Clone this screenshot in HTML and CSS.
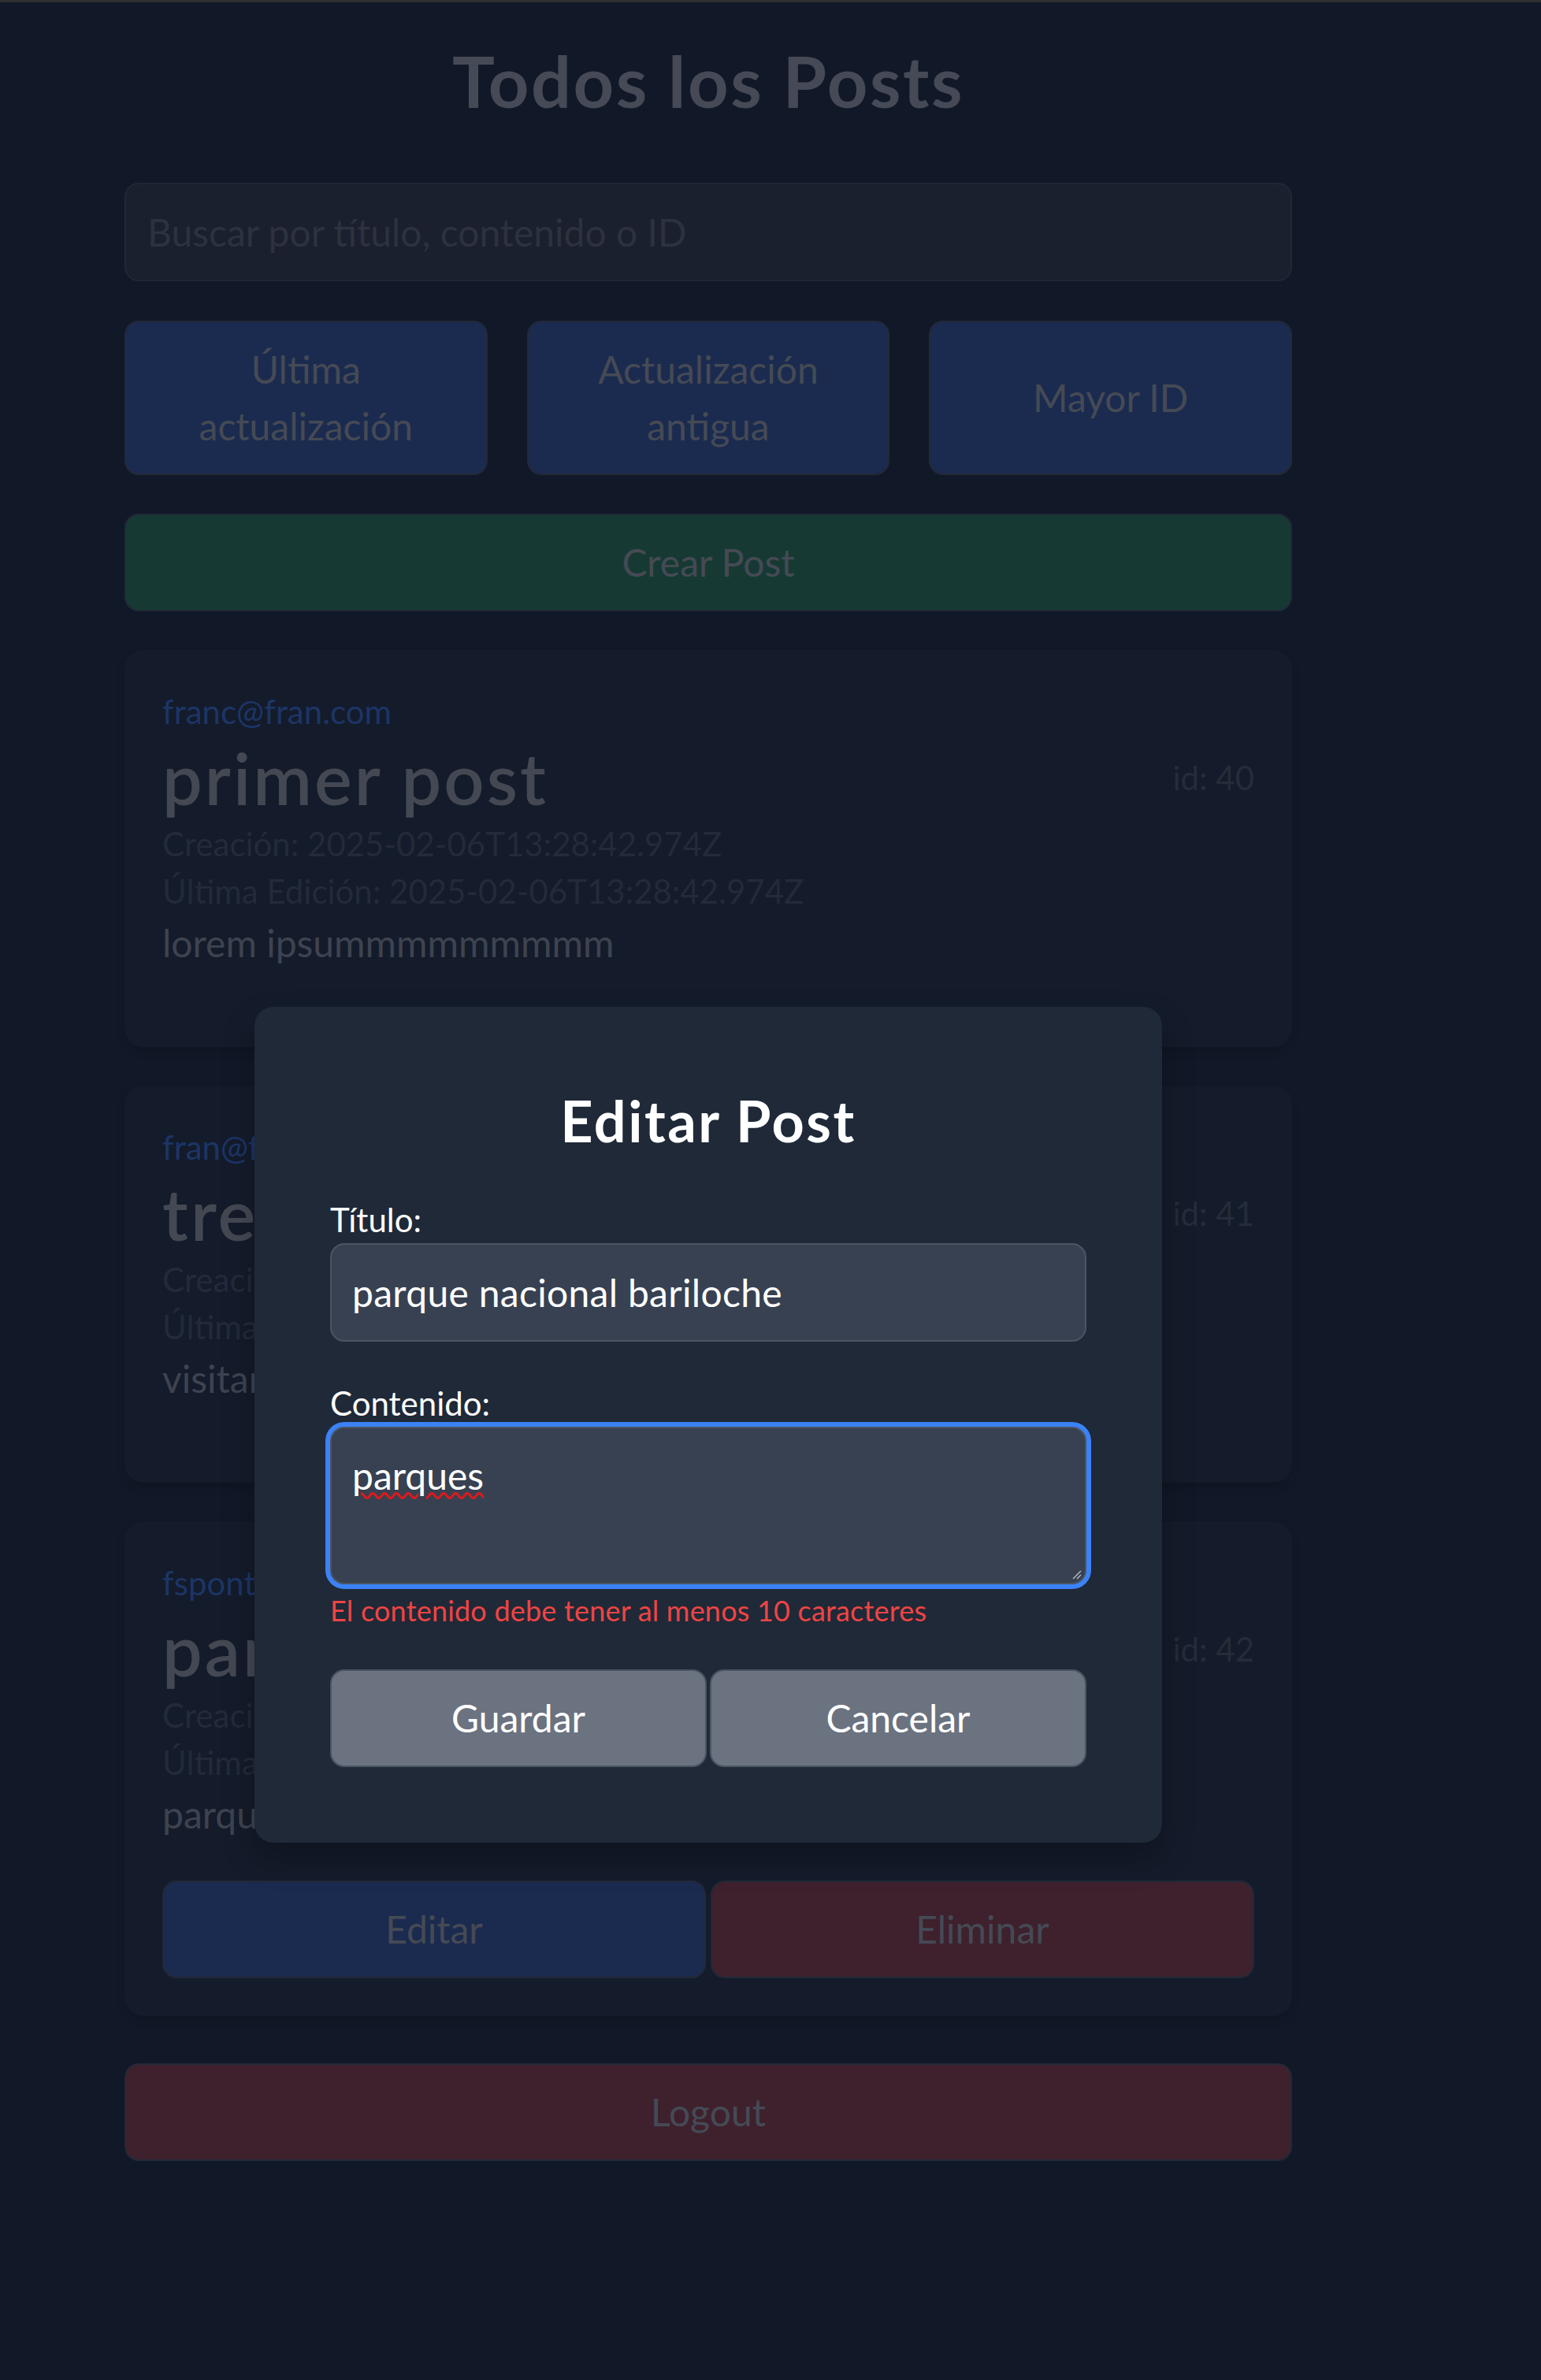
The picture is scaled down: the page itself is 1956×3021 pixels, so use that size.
FILE: index.html
```html
<!DOCTYPE html>
<html lang="es">
<head>
<meta charset="utf-8">
<title>Todos los Posts</title>
<link rel="stylesheet" href="styles.css">
</head>
<body>
<div class="topbar"></div>
<div class="page">
  <main class="container">
    <h1 class="page-title">Todos los Posts</h1>
    <input class="search" type="text" placeholder="Buscar por título, contenido o ID">
    <div class="sort-row">
      <button class="btn btn-blue">Última actualización</button>
      <button class="btn btn-blue">Actualización antigua</button>
      <button class="btn btn-blue">Mayor ID</button>
    </div>
    <button class="btn btn-green btn-wide">Crear Post</button>

    <div class="posts">
      <article class="card">
        <p class="card-email">franc@fran.com</p>
        <div class="card-head">
          <h2 class="card-title">primer post</h2>
          <span class="card-id">id: 40</span>
        </div>
        <p class="card-date">Creación: 2025-02-06T13:28:42.974Z</p>
        <p class="card-date">Última Edición: 2025-02-06T13:28:42.974Z</p>
        <p class="card-body">lorem ipsummmmmmmmm</p>
        <div class="card-actions"></div>
      </article>

      <article class="card">
        <p class="card-email">fran@fran.com</p>
        <div class="card-head">
          <h2 class="card-title">tres</h2>
          <span class="card-id">id: 41</span>
        </div>
        <p class="card-date">Creación: 2025-02-06T13:41:10.512Z</p>
        <p class="card-date">Última Edición: 2025-02-06T13:41:10.512Z</p>
        <p class="card-body">visitar bariloche</p>
        <div class="card-actions"></div>
      </article>

      <article class="card">
        <p class="card-email">fsponton@gmail.com</p>
        <div class="card-head">
          <h2 class="card-title">parque nacional</h2>
          <span class="card-id">id: 42</span>
        </div>
        <p class="card-date">Creación: 2025-02-06T14:02:31.208Z</p>
        <p class="card-date">Última Edición: 2025-02-06T14:02:31.208Z</p>
        <p class="card-body">parques</p>
        <div class="card-actions">
          <button class="btn btn-blue btn-half">Editar</button>
          <button class="btn btn-red btn-half">Eliminar</button>
        </div>
      </article>
    </div>

    <button class="btn btn-red btn-wide btn-logout">Logout</button>
  </main>

  <div class="overlay">
    <form class="modal">
      <h2 class="modal-title">Editar Post</h2>
      <div class="field">
        <label class="field-label" for="titulo">Título:</label>
        <input class="field-input" id="titulo" type="text" value="parque nacional bariloche">
      </div>
      <div class="field field-last">
        <label class="field-label">Contenido:</label>
        <div class="field-textarea" role="textbox" aria-multiline="true"><span class="misspelled">parques</span><svg class="resize-grip" width="14" height="14" viewBox="0 0 14 14"><path d="M13 3 L3 13 M13 8 L8 13" stroke="#b8bcc4" stroke-width="1.4" fill="none"/></svg></div>
        <p class="field-error">El contenido debe tener al menos 10 caracteres</p>
      </div>
      <div class="modal-actions">
        <button type="button" class="btn btn-gray btn-half">Guardar</button>
        <button type="button" class="btn btn-gray btn-half">Cancelar</button>
      </div>
    </form>
  </div>
</div>
</body>
</html>
```

FILE: styles.css
```css
* {
  box-sizing: border-box;
}

html, body {
  margin: 0;
  padding: 0;
  background: #111827;
}

body {
  font-family: "Lato", "Noto Sans", "Liberation Sans", sans-serif;
  font-size: 48px;
  line-height: 72px;
  color: #464b57;
  min-height: 3021px;
}

p, h1, h2 {
  margin: 0;
}

.topbar {
  height: 3px;
  background: #2f3031;
}

.page {
  position: relative;
  width: 1798px;
  min-height: 3018px;
}

.container {
  width: 1482px;
  margin: 0 auto;
  padding-top: 45px;
  display: flex;
  flex-direction: column;
}

.page-title {
  font-size: 90px;
  line-height: 108px;
  font-weight: 700;
  letter-spacing: 2.5px;
  text-align: center;
  color: #454a56;
  margin-bottom: 76px;
}

.search {
  display: block;
  width: 100%;
  height: 125px;
  padding: 0 27px;
  font-family: inherit;
  font-size: 48px;
  color: #464b57;
  background: #1a202d;
  border: 2px solid #212735;
  border-radius: 18px;
  outline: none;
  margin-bottom: 50px;
}

.search::placeholder {
  color: #2c323f;
}

.btn {
  font-family: inherit;
  font-size: 48px;
  line-height: 72px;
  color: #454a55;
  border: 2px solid #222938;
  border-radius: 18px;
  padding: 24px 48px;
  text-align: center;
  cursor: pointer;
}

.btn-blue {
  background: #1b2b4f;
}

.btn-green {
  background: #163a33;
}

.btn-red {
  background: #3e212d;
}

.btn-gray {
  background: #6b7280;
  border-color: #4b5563;
  color: #ffffff;
}

.sort-row {
  display: grid;
  grid-template-columns: repeat(3, 1fr);
  column-gap: 50px;
  margin-bottom: 49px;
}

.btn-wide {
  width: 100%;
  height: 124px;
}

.posts {
  display: flex;
  flex-direction: column;
  gap: 49px;
  margin-top: 49px;
}

.card {
  background: #141b2a;
  border-radius: 24px;
  padding: 48px;
  box-shadow: 0 6px 12px rgba(0, 0, 0, 0.12);
}

.card-email {
  font-size: 42px;
  line-height: 60px;
  color: #1c3566;
}

.card-head {
  display: flex;
  justify-content: space-between;
  align-items: center;
}

.card-title {
  font-size: 90px;
  line-height: 108px;
  font-weight: 600;
  letter-spacing: 3px;
  color: #434853;
}

.card-id {
  font-size: 42px;
  line-height: 60px;
  color: #252c3a;
}

.card-date {
  font-size: 42px;
  line-height: 60px;
  color: #232a39;
}

.card-body {
  font-size: 48px;
  line-height: 72px;
  color: #3e4350;
}

.card-actions {
  display: flex;
  gap: 6px;
  margin-top: 48px;
}

.btn-half {
  flex: 1;
  height: 124px;
}

.btn-logout {
  margin-top: 60px;
}

.overlay {
  position: absolute;
  inset: 0;
  display: flex;
  justify-content: center;
  align-items: flex-start;
  padding-top: 1275px;
}

.modal {
  width: 1152px;
  background: #1f2937;
  border-radius: 24px;
  padding: 96px;
  box-shadow: 0 20px 40px rgba(0, 0, 0, 0.25);
}

.modal-title {
  font-size: 72px;
  line-height: 96px;
  font-weight: 700;
  letter-spacing: 2.5px;
  color: #ffffff;
  text-align: center;
  margin-bottom: 48px;
}

.field {
  margin-bottom: 48px;
}

.field-last {
  margin-bottom: 0;
}

.field-label {
  display: block;
  font-size: 42px;
  line-height: 60px;
  color: #ffffff;
}

.field-input {
  display: block;
  width: 100%;
  height: 125px;
  padding: 0 26px;
  font-family: inherit;
  font-size: 48px;
  letter-spacing: 0.3px;
  color: #ffffff;
  background: #374151;
  border: 2px solid #4b5563;
  border-radius: 18px;
  outline: none;
}

.field-textarea {
  position: relative;
  height: 200px;
  padding: 24px 26px;
  font-size: 48px;
  line-height: 72px;
  color: #ffffff;
  background: #374151;
  border: 2px solid #4b5563;
  border-radius: 18px;
  box-shadow: 0 0 0 6px #3b82f6;
}

.misspelled {
  text-decoration: underline wavy #e0191b;
  text-decoration-thickness: 3px;
  text-underline-offset: 3px;
}

.resize-grip {
  position: absolute;
  right: 4px;
  bottom: 4px;
}

.field-error {
  font-size: 36px;
  line-height: 48px;
  letter-spacing: 0.2px;
  color: #ef4444;
  margin-top: 9px;
}

.modal-actions {
  display: flex;
  gap: 4px;
  margin-top: 51px;
}
```
